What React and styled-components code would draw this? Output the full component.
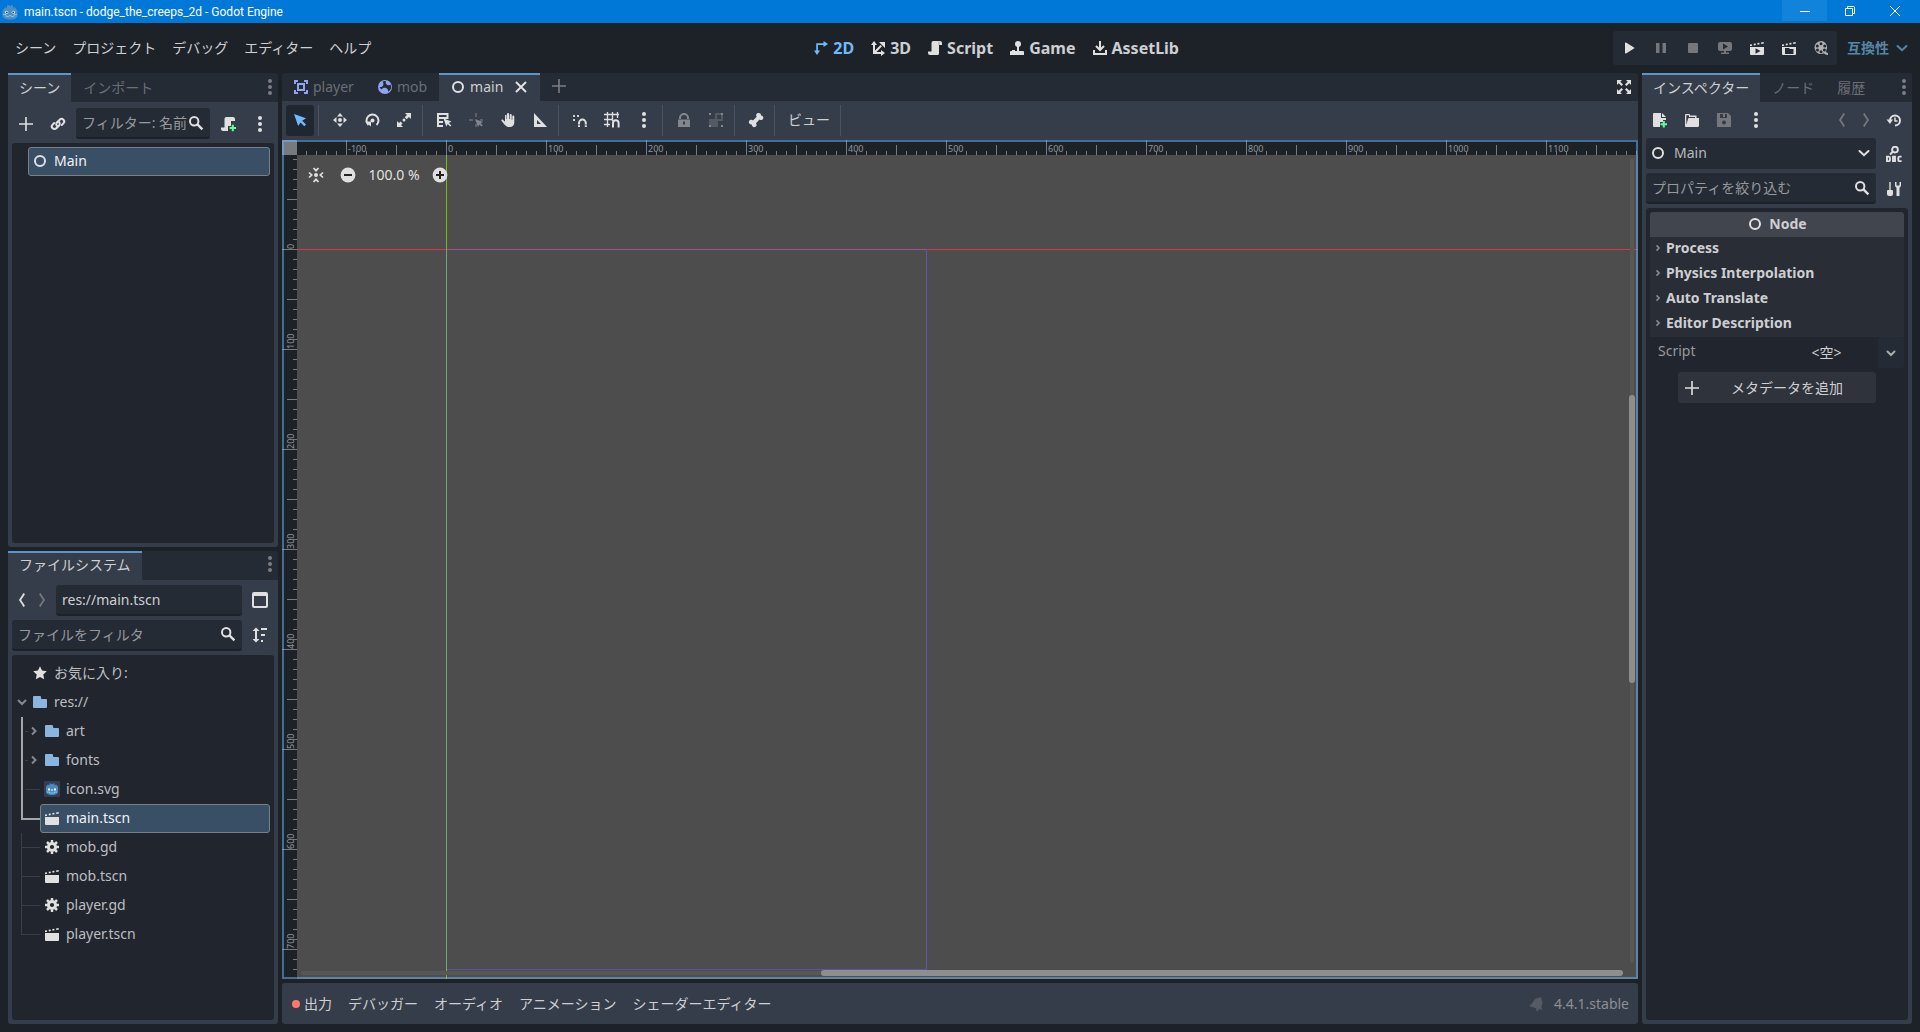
import styled, { createGlobalStyle } from 'styled-components';

const font = "'Noto Sans', 'Noto Sans CJK JP', sans-serif";

const sceneMenus = ['シーン', 'プロジェクト', 'デバッグ', 'エディター', 'ヘルプ'];

const mainScreens = [
  { icon: 'twoD', label: '2D', active: true },
  { icon: 'threeD', label: '3D' },
  { icon: 'script', label: 'Script' },
  { icon: 'game', label: 'Game' },
  { icon: 'assetLib', label: 'AssetLib' },
];

const runButtons = [
  { icon: 'play', label: 'Play' },
  { icon: 'pause', label: 'Pause', dim: true },
  { icon: 'stop', label: 'Stop', dim: true },
  { icon: 'remote', label: 'Remote Debug', dim: true },
  { icon: 'playScene', label: 'Run Current Scene' },
  { icon: 'playCustom', label: 'Run Specific Scene' },
  { icon: 'movie', label: 'Movie Maker', soft: true },
];

// null is a separator
const canvasTools = [
  { icon: 'select', label: 'Select', active: true },
  null,
  { icon: 'move', label: 'Move' },
  { icon: 'rotate', label: 'Rotate' },
  { icon: 'scale', label: 'Scale' },
  null,
  { icon: 'listSelect', label: 'List Select' },
  { icon: 'pivot', label: 'Pivot', dim: true },
  { icon: 'pan', label: 'Pan' },
  { icon: 'ruler', label: 'Ruler' },
  null,
  { icon: 'smartSnap', label: 'Smart Snap' },
  { icon: 'gridSnap', label: 'Grid Snap' },
  { icon: 'dots', label: 'Snapping Options' },
  null,
  { icon: 'lock', label: 'Lock', dim: true },
  { icon: 'group', label: 'Group', dim: true },
  null,
  { icon: 'bone', label: 'Skeleton' },
  null,
];

const files = [
  { name: 'お気に入り:', icon: 'star', level: 0 },
  { name: 'res://', icon: 'folder', level: 0, arrow: 'down', color: '#8ab5dd' },
  { name: 'art', icon: 'folder', level: 1, arrow: 'right', color: '#8ab5dd', line: 'bold' },
  { name: 'fonts', icon: 'folder', level: 1, arrow: 'right', color: '#8ab5dd', line: 'bold' },
  { name: 'icon.svg', icon: 'godotFile', level: 1, line: 'bold' },
  { name: 'main.tscn', icon: 'packedScene', level: 1, selected: true, line: 'boldEnd' },
  { name: 'mob.gd', icon: 'gear', level: 1, line: 'thin' },
  { name: 'mob.tscn', icon: 'packedScene', level: 1, line: 'thin' },
  { name: 'player.gd', icon: 'gear', level: 1, line: 'thin' },
  { name: 'player.tscn', icon: 'packedScene', level: 1, line: 'thinEnd' },
];

const sections = [
  'Process',
  'Physics Interpolation',
  'Auto Translate',
  'Editor Description',
];

const bottomTabs = [
  'デバッガー',
  'オーディオ',
  'アニメーション',
  'シェーダーエディター',
];

const clapper = (
  <path d="M1 4.600l1.800-.4.4 1.600-2.200.5zM4.600 3.800l2-.4.3 1.600-2 .4zM8.300 3.100l2-.4.3 1.600-2 .4zM12 2.400l2.600-.5.3 1.600-2.600.5z" />
);

const icons = {
  plus: <path d="M7.200 1v6.200H1v1.600h6.200V15h1.600V8.800H15V7.200H8.800V1z" />,
  link: (
    <g fill="none" stroke="currentColor" strokeWidth="2" strokeLinecap="round">
      <path d="M7.200 10.200a2.600 2.600 0 0 1-.3-3.700l2.800-2.800a2.600 2.600 0 0 1 3.700 3.700l-1.600 1.600" />
      <path d="M8.800 5.800a2.600 2.600 0 0 1 .3 3.700l-2.800 2.800a2.600 2.600 0 0 1-3.700-3.700l1.600-1.600" />
    </g>
  ),
  search: (
    <g fill="none" stroke="currentColor" strokeWidth="2">
      <circle cx="6.200" cy="6.200" r="4.200" />
      <path d="M9.200 9.200l5.200 5.200" strokeWidth="2.400" />
    </g>
  ),
  dots: (
    <g>
      <circle cx="8" cy="2" r="2" />
      <circle cx="8" cy="8" r="2" />
      <circle cx="8" cy="14" r="2" />
    </g>
  ),
  node: <circle cx="8" cy="8" r="5" fill="none" stroke="currentColor" strokeWidth="2" />,
  script: (
    <g>
      <path d="M6 1a2 2 0 0 0-1.500 2v8H9v2a2 2 0 0 1-2 2h3a2 2 0 0 0 2-2V5h3V3a2 2 0 0 0-2-2z" />
      <path d="M4.500 3v8.500H7V15H3a2 2 0 0 1-2-2v-1.500h3.500zM4.500 11H12v2a2 2 0 0 1-2 2H3z" />
      <path d="M12 1.500V5" stroke="#9a9a9a" strokeWidth=".8" />
    </g>
  ),
  scriptAdd: (
    <g>
      <path d="M6 1a2 2 0 0 0-1.500 2v8.500H1V13a2 2 0 0 0 2 2h5V10h3V5h4V3a2 2 0 0 0-2-2z" />
      <path d="M11.800 8.800v2.200H9.600v2h2.200v2.200h2V13H16v-2h-2.200V8.800z" fill="#5fff97" />
    </g>
  ),
  twoD: (
    <g>
      <path d="M3.200 11V3.200H11v1.700H4.900V11z" />
      <path d="M10.500 1L15 4l-4.500 3zM1 10.500h6L4 15z" />
    </g>
  ),
  threeD: (
    <g>
      <path d="M3 4h2v6.500L10.500 5 12 6.300 6.500 12H12v2H3z" />
      <path d="M1 5l3-4 3 4zM11 10l4 3-4 3zM9 2h6v6z" />
    </g>
  ),
  game: (
    <g>
      <circle cx="9" cy="4" r="3" />
      <path d="M8 6h2v5h4a1 1 0 0 1 1 1v3H1v-3a1 1 0 0 1 1-1h1v-1h3v1h2z" />
    </g>
  ),
  assetLib: (
    <g fill="none" stroke="currentColor" strokeWidth="2">
      <path d="M8 1v9M4 6l4 4 4-4" />
      <path d="M2 10v4h12v-4" />
    </g>
  ),
  play: <path d="M4 3.200v9.600a.7.7 0 0 0 1 .6l8-4.800a.7.7 0 0 0 0-1.200l-8-4.800a.7.7 0 0 0-1 .6z" />,
  pause: <path d="M3 3h3.500v10H3zM9.500 3H13v10H9.500z" />,
  stop: <rect x="3" y="3" width="10" height="10" rx="1" />,
  remote: (
    <path
      fillRule="evenodd"
      d="M3 2a2 2 0 0 0-2 2v5a2 2 0 0 0 2 2h4v1.500H4V14h8v-1.500H9V11h4a2 2 0 0 0 2-2V4a2 2 0 0 0-2-2zm3 1.500l5 3-5 3z"
    />
  ),
  playScene: (
    <g>
      {clapper}
      <path fillRule="evenodd" d="M1 7h14v7a1 1 0 0 1-1 1H2a1 1 0 0 1-1-1zm5.500 1.300v5.400l5-2.700z" />
    </g>
  ),
  playCustom: (
    <g>
      {clapper}
      <path fillRule="evenodd" d="M1 7h14v7a1 1 0 0 1-1 1H2a1 1 0 0 1-1-1zm3 1v6h8.500V9H8.500V8z" />
    </g>
  ),
  packedScene: (
    <g>
      {clapper}
      <path d="M1 7h14v7a1 1 0 0 1-1 1H2a1 1 0 0 1-1-1z" />
    </g>
  ),
  movie: (
    <path
      fillRule="evenodd"
      d="M8 1a6.500 6.500 0 1 0 3 12.300c.8.900 2 1.700 4 1.700v-2c-1.500 0-2-1-2-2a6.500 6.500 0 0 0-5-10zM8 2.300a1.500 1.500 0 1 1 0 3 1.500 1.500 0 0 1 0-3zM4.300 4.400a1.500 1.500 0 1 1 0 3 1.500 1.500 0 0 1 0-3zM11.700 4.400a1.500 1.500 0 1 1 0 3 1.500 1.500 0 0 1 0-3zM4.500 8.600a1.500 1.500 0 1 1 0 3 1.500 1.500 0 0 1 0-3zM11.400 8.600a1.500 1.500 0 1 1 0 3 1.500 1.500 0 0 1 0-3zM8 10.300a1.500 1.500 0 1 1 0 3 1.500 1.500 0 0 1 0-3z"
    />
  ),
  chevronDown: (
    <path d="M3.500 6l4.500 4.200L12.500 6" fill="none" stroke="currentColor" strokeWidth="2" strokeLinecap="round" />
  ),
  arrowDown: (
    <path d="M4.500 6.500L8 10l3.500-3.500" fill="none" stroke="currentColor" strokeWidth="2" strokeLinecap="round" />
  ),
  arrowRight: (
    <path d="M6 4.500L9.500 8 6 11.500" fill="none" stroke="currentColor" strokeWidth="2" />
  ),
  back: <path d="M10.200 1.500Q8.200 5 6 8q2.200 3 4.200 6.500" fill="none" stroke="currentColor" strokeWidth="1.800" />,
  forward: <path d="M5.800 1.500Q7.800 5 10 8q-2.200 3-4.200 6.500" fill="none" stroke="currentColor" strokeWidth="1.800" />,
  close: <path d="M3 3l10 10M13 3L3 13" fill="none" stroke="currentColor" strokeWidth="2" />,
  body: (
    <g>
      <path d="M1 1h4v2H3v2H1zM11 1h4v4h-2V3h-2zM1 11h2v2h2v2H1zM13 11h2v4h-4v-2h2z" />
      <rect x="5" y="5" width="6" height="6" fill="none" stroke="currentColor" strokeWidth="2" />
    </g>
  ),
  rigidBody: (
    <path
      fillRule="evenodd"
      d="M8 1a7 7 0 1 0 0 14A7 7 0 0 0 8 1zM9 2.300c-.7 1.500 0 3 1.500 3.700 1 .5 2.200.2 3-.5a5.700 5.700 0 0 1-2.300 7.200c.3-1.700-.7-3.200-2.300-3.700-1.700-.5-3.500.1-4.300 1.500-.9-.6-1.700-1.600-2-2.500 1.500.2 3-.3 3.600-1.800.5-1.300.2-2.500-.7-3.500 1-.5 2.300-.8 3.500-.4z"
    />
  ),
  expand: (
    <path d="M1 1h5L4.300 2.700 7 5.400 5.400 7 2.700 4.300 1 6zM15 1v5l-1.700-1.700L10.600 7 9 5.400l2.700-2.700L10 1zM1 15v-5l1.700 1.700L5.400 9 7 10.600l-2.700 2.700L6 15zM15 15h-5l1.700-1.700L9 10.600 10.600 9l2.700 2.700L15 10z" />
  ),
  select: <path d="M2 2l4.200 12 2.300-3.600 3.800 3.800 1.700-1.700-3.800-3.800L14 6.200z" />,
  move: (
    <g>
      <circle cx="8" cy="8" r="2" />
      <path d="M8 1l3 3.500H5zM8 15l3-3.500H5zM1 8l3.500-3v6zM15 8l-3.500-3v6z" />
    </g>
  ),
  rotate: (
    <g>
      <circle cx="8.500" cy="8.500" r="2" />
      <path d="M4.500 13A6 6 0 1 1 12.500 13" fill="none" stroke="currentColor" strokeWidth="2" />
      <path d="M1 9.500h6v5z" />
    </g>
  ),
  scale: (
    <g>
      <path d="M9 1h6v6l-2-2-2.300 2.300-2-2L11 3zM1 9l2 2 1.500-1.500 2 2L5 13l2 2H1z" />
      <circle cx="8" cy="8" r="1.500" />
    </g>
  ),
  listSelect: (
    <g>
      <path d="M1 1h11v2H1zM1 5h11v2H1zM1 9h6v2H1zM1 13h6v2H1zM1 1h2v14H1zM10.500 1h2v6h-2z" />
      <path d="M7.500 6.500l2.800 8 1.400-2.400 2.500 2.500 1.200-1.200-2.500-2.500 2.500-1.400z" />
    </g>
  ),
  pivot: (
    <g>
      <path d="M7 1h2v4H7zM1 7h4v2H1zM7 12h2v3H7zM12 7h3v2h-3z" opacity=".5" />
      <path d="M7 7l3 8 1.400-2.400 2 2 1.300-1.300-2-2L15 10z" />
    </g>
  ),
  pan: (
    <path d="M7 2a1 1 0 0 1 2 0v5h.7V3a1 1 0 0 1 2 0v5h.6V4.500a1 1 0 0 1 2 0V10c0 3-1.500 5-5 5-3 0-4.300-1.600-7.800-6.200C.8 7.600 2.300 7 3.200 8L5 9.700V3.500a1 1 0 0 1 1.500-.5V7H7z" />
  ),
  ruler: <path fillRule="evenodd" d="M2 1v14h13zm3 7l4 4H5z" />,
  smartSnap: (
    <g>
      <path d="M1 3h2v2H1zM1 7h2v2H1zM5 3h2v2H5z" opacity=".9" />
      <path d="M7 15v-4a3.200 3.200 0 0 1 6.800 0v4" fill="none" stroke="currentColor" strokeWidth="2" />
      <path d="M6 12.800h2M12.800 12.800h2" stroke="#363d4a" strokeWidth=".8" />
    </g>
  ),
  gridSnap: (
    <g>
      <path d="M3.500 0v15M8.500 0v9M13.500 0v6M0 2.500h15M0 7.500h9M0 12.500h6" stroke="currentColor" strokeWidth="1.300" />
      <path d="M9 15.500V11a2.800 2.800 0 0 1 5.600 0v4.500" fill="none" stroke="currentColor" strokeWidth="2" />
    </g>
  ),
  lock: (
    <g>
      <path d="M4 7V6a4 4 0 0 1 8 0v1" fill="none" stroke="currentColor" strokeWidth="2" />
      <path fillRule="evenodd" d="M2 7.500h12V15H2zm5 2v3h2v-3z" />
    </g>
  ),
  group: (
    <g>
      <path d="M1 7h6V1h8v8h-5v6H1zm8-4v4h4V3z" fillRule="evenodd" opacity=".4" />
      <path d="M1 1h2v2H1zM13 1h2v2h-2zM1 13h2v2H1zM13 13h2v2h-2z" />
    </g>
  ),
  bone: (
    <path d="M10.600 1a2.300 2.300 0 0 0-1.900 3.800L5 8.500a2.400 2.400 0 1 0-1.200 4A2.400 2.400 0 1 0 8 11.200l3.500-3.700a2.300 2.300 0 1 0 1.500-4A2.300 2.300 0 0 0 10.600 1z" />
  ),
  center: (
    <g>
      <circle cx="8" cy="8" r="2" />
      <path
        d="M5.500 1L8 3.700 10.500 1M5.500 15L8 12.300 10.500 15M1 5.500L3.700 8 1 10.500M15 5.500L12.300 8l2.700 2.500"
        fill="none"
        stroke="currentColor"
        strokeWidth="1.700"
      />
    </g>
  ),
  zoomOut: (
    <g>
      <circle cx="8" cy="8" r="7.400" />
      <path d="M4 8h8" stroke="#222" strokeWidth="2" />
    </g>
  ),
  zoomIn: (
    <g>
      <circle cx="8" cy="8" r="7.400" />
      <path d="M4 8h8M8 4v8" stroke="#222" strokeWidth="2" />
    </g>
  ),
  window: (
    <path fillRule="evenodd" d="M2 0a2 2 0 0 0-2 2v12a2 2 0 0 0 2 2h12a2 2 0 0 0 2-2V2a2 2 0 0 0-2-2zm0 4h12v10H2z" />
  ),
  sort: (
    <g>
      <path d="M3 4h2v8h2.500L4 15.500.5 12H3V4H.5L4 .5 7.500 4H5v8H3z" />
      <path d="M9 1h6v2H9zM9 7h4v2H9zM9 13h2v2H9z" />
    </g>
  ),
  star: <path d="M8 1.200l2 4.400 4.800.6-3.500 3.300.9 4.800L8 12l-4.200 2.300.9-4.800L1.200 6.200 6 5.600z" />,
  folder: (
    <path d="M2 2a1 1 0 0 0-1 1v10a1 1 0 0 0 1 1h12a1 1 0 0 0 1-1V6a1 1 0 0 0-1-1h-4a1 1 0 0 1-1-1V3a1 1 0 0 0-1-1z" />
  ),
  gear: (
    <g>
      <circle cx="8" cy="8" r="3.600" fill="none" stroke="currentColor" strokeWidth="3" />
      <path
        d="M8 1v2.500M8 12.500V15M1 8h2.500M12.500 8H15M3 3l1.800 1.800M11.200 11.200L13 13M13 3l-1.800 1.800M4.800 11.200L3 13"
        stroke="currentColor"
        strokeWidth="2.500"
      />
    </g>
  ),
  godotFile: (
    <g>
      <rect x="0" y="0" width="16" height="16" rx="1" fill="#363d52" />
      <path d="M2.500 5L4 3.500l1.500 1V2.500h1.500l1 1 1-1h1.500v2l1.500-1L13.500 5l.5 1v5c0 2-3 3-6 3s-6-1-6-3V6z" fill="#478cbf" />
      <path d="M4 7.500h2v2H4zM10 7.500h2v2h-2zM7.500 8h1v2h-1z" fill="#fff" />
      <path d="M3 11h2.500v1h5v-1H13" fill="none" stroke="#a9cbe5" strokeWidth=".7" />
    </g>
  ),
  godot: (
    <g>
      <path
        d="M1.500 5.500l2-2.500L5 4V1.500L7 1l1 1.500L9 1l2 .5V4l1.500-1 2 2.500 1 1.500v4.500C15.500 14 12 15.500 8 15.500S.5 14 .5 11.500V7z"
        fill="#4b90c4"
      />
      <path d="M1 10.500h3v2h3v-1h2v1h3v-2h3" fill="none" stroke="#9cc3e0" strokeWidth=".8" />
      <circle cx="4.600" cy="8.300" r="1.600" fill="#e4eff7" />
      <circle cx="11.400" cy="8.300" r="1.600" fill="#e4eff7" />
      <circle cx="4.800" cy="8.400" r=".9" fill="#414042" />
      <circle cx="11.200" cy="8.400" r=".9" fill="#414042" />
    </g>
  ),
  newResource: (
    <g>
      <path d="M2 1a1 1 0 0 0-1 1v12a1 1 0 0 0 1 1h6v-5h3V8h3V6H9V1zM10 1v4h4z" />
      <path d="M10.800 9v2.200H8.500v2h2.300v2.300h2v-2.300H15v-2h-2.200V9z" fill="#5fff97" />
    </g>
  ),
  load: (
    <path
      fillRule="evenodd"
      d="M1 3a1 1 0 0 1 1-1h3a1 1 0 0 1 1 1v.5h6.500V6H15v7.500a1.500 1.500 0 0 1-1.500 1.500H2a1 1 0 0 1-1-1zm1.300.3V13L4 7a1 1 0 0 1 1-1h6V5H5V3.300z"
    />
  ),
  save: (
    <path fillRule="evenodd" d="M1 1h11l3 3v11H1zm3 1v4h7V2H9v3H7V2zm4 6.500a2 2 0 1 0 0 4 2 2 0 0 0 0-4z" />
  ),
  history: (
    <g>
      <path d="M4 8.500a5 5 0 1 1 5 5" fill="none" stroke="currentColor" strokeWidth="2" />
      <path d="M.5 7.500h6.500L4 12z" />
      <path d="M9 5.500V9h2.500" fill="none" stroke="currentColor" strokeWidth="1.500" />
    </g>
  ),
  doc: (
    <g fill="none" stroke="currentColor" strokeWidth="1.900">
      <circle cx="9" cy="3.600" r="2.900" />
      <path d="M7 5.500L4 8.500" />
      <path d="M1 10.600v4.600h1.700a1.200 1.200 0 0 0 1.200-1.200v-2.200a1.200 1.200 0 0 0-1.200-1.200zM7 10.600h2v4.600H7zM15.600 10.600h-2.100a1.200 1.200 0 0 0-1.200 1.200V14a1.200 1.200 0 0 0 1.200 1.200h2.100" />
    </g>
  ),
  tools: (
    <g>
      <path d="M3.300 1h1.400v8H6a1 1 0 0 1 1 1v3a2 2 0 0 1-2 2H3a2 2 0 0 1-2-2v-3a1 1 0 0 1 1-1h1.300z" />
      <path d="M9 1v3.500a3 3 0 0 0 1.500 2.300V15h3V6.800A3 3 0 0 0 15 4.500V1h-1.500v3.500h-3V1z" />
    </g>
  ),
  bell: (
    <path d="M12.500 1.500c1 .3 1.500 1 1 2l.8 2c.7 2-.8 4-.8 6l1 2.200-3.500-.7-.8 1.800h-2l-.2-2.500L.8 10 3 8.500c1.700-1.200 2-3.500 4-5.200 1.500-1.200 4-1.800 5.500-1.800z" />
  ),
};

const Svg = styled.svg`
  display: block;
  flex: none;
  fill: currentColor;
  color: ${(props) => props.$color || 'inherit'};
`;

const Icon = ({ name, color }) => (
  <Svg width="16" height="16" viewBox="0 0 16 16" $color={color} aria-hidden="true">
    {icons[name]}
  </Svg>
);

const GlobalStyle = createGlobalStyle`
  * {
    box-sizing: border-box;
  }
  body {
    margin: 0;
    background: #1d2229;
    color: #cdcfd2;
    font-family: ${font};
    font-size: 14px;
    line-height: 20px;
  }
  button, input, select {
    margin: 0;
    padding: 0;
    border: 0;
    background: none;
    color: inherit;
    font: inherit;
  }
  ul {
    margin: 0;
    padding: 0;
    list-style: none;
  }
`;

const Editor = styled.div`
  display: flex;
  flex-direction: column;
  min-height: 100vh;
`;

const TitleBar = styled.header`
  display: flex;
  align-items: center;
  height: 23px;
  padding: 0 3px 0 2px;
  background: #0078d7;
  color: #fff;
  font-family: Roboto, ${font};
  font-size: 12px;
`;

const WindowTitle = styled.div`
  flex: 1;
  margin-left: 6px;
`;

const WindowButton = styled.button`
  display: flex;
  align-items: center;
  justify-content: center;
  align-self: flex-start;
  width: 45px;
  height: 21px;
  background: ${(props) => (props.$hover ? '#1283da' : 'none')};
  svg {
    fill: none;
    stroke: #fff;
  }
`;

const MenuBar = styled.div`
  display: flex;
  align-items: center;
  justify-content: space-between;
  height: 50px;
  padding: 0 10px 0 7px;
`;

const Group = styled.div`
  display: flex;
  align-items: center;
`;

const MenuButton = styled.button`
  display: flex;
  align-items: center;
  padding: 4px 8px;
`;

const ScreenButton = styled.button`
  display: flex;
  align-items: center;
  gap: 4px;
  padding: 4px 8px;
  font-size: 16px;
  font-weight: bold;
  color: ${(props) => (props.$active ? '#70bafa' : '#cdcfd2')};
  svg {
    color: ${(props) => (props.$active ? '#70bafa' : '#e0e0e0')};
  }
`;

const RunBar = styled.div`
  display: flex;
  gap: 4px;
  padding: 3px 2px;
  border-radius: 3px;
  background: #252b34;
`;

const IconButton = styled.button`
  display: flex;
  align-items: center;
  justify-content: center;
  flex: none;
  width: ${(props) => props.$width || 28}px;
  height: 28px;
  border-radius: 3px;
  color: ${(props) => (props.$dim ? '#75777c' : props.$soft ? '#b0b1b3' : '#e0e0e0')};
`;

const RenderButton = styled(MenuButton)`
  gap: 5px;
  padding: 4px 0 4px 10px;
  color: #5586a8;
  font-weight: bold;
`;

const Workspace = styled.div`
  flex: 1;
  display: grid;
  grid-template-columns: 270px 1fr 270px;
  gap: 4px;
  padding: 0 8px 8px;
`;

const Column = styled.div`
  display: flex;
  flex-direction: column;
  gap: 4px;
  min-width: 0;
`;

const Dock = styled.section`
  flex: 1;
  display: flex;
  flex-direction: column;
  min-height: 0;
`;

const TabBar = styled.div`
  display: flex;
  align-items: stretch;
  gap: 1px;
  height: ${(props) => props.$height || 29}px;
  background: #252b34;
  border-radius: 3px 3px 0 0;
  > :last-child {
    margin-left: auto;
  }
`;

const Tab = styled.button`
  display: flex;
  align-items: center;
  gap: 4px;
  padding: 0 11px 2px;
  border-top: 2px solid ${(props) => (props.$active ? '#5a96cd' : 'transparent')};
  background: ${(props) => (props.$active ? '#363d4a' : 'none')};
  color: ${(props) => (props.$active ? '#cdcfd2' : '#6a6e76')};
`;

const CloseIcon = styled.span`
  margin-left: 6px;
  color: #e0e0e0;
`;

const TabMenu = styled.button`
  display: flex;
  align-items: center;
  color: #7b7e84;
  padding: 0 ${(props) => props.$side || 0}px 2px;
`;

const DockBody = styled.div`
  flex: 1;
  display: flex;
  flex-direction: column;
  gap: 4px;
  padding: ${(props) => props.$top}px 4px 4px;
  background: #363d4a;
  border-radius: 0 0 3px 3px;
`;

const Row = styled.div`
  display: flex;
  align-items: center;
  gap: 4px;
`;

const Spacer = styled.div`
  flex: 1;
`;

const Field = styled.label`
  flex: 1;
  display: flex;
  align-items: center;
  min-width: 0;
  height: 31px;
  padding: 0 6px;
  border-bottom: 2px solid #1d2229;
  border-radius: 3px;
  background: #252b34;
  color: #e0e0e0;
`;

const SelectField = styled(Field)`
  padding: 0 4px;
  border-bottom-color: #252b34;
`;

const TextInput = styled.input`
  flex: 1;
  min-width: 0;
  height: 28px;
  color: #cdcfd2;
  outline: none;
  &::placeholder {
    color: #96999d;
    opacity: 1;
  }
`;

const NodeSelect = styled.select`
  flex: 1;
  min-width: 0;
  margin-left: 8px;
  appearance: none;
  outline: none;
  color: #b8babd;
`;

const Tree = styled.ul`
  flex: 1;
  padding: 4px 4px 4px 0;
  border-radius: 3px;
  background: #21262e;
`;

const TreeRow = styled.li`
  position: relative;
  display: flex;
  align-items: center;
  height: 29px;
  padding-left: ${(props) => 4 + props.$level * 12}px;
  /* the connector to the parent, down the left and across to the item */
  &::before,
  &::after {
    content: '';
    display: ${(props) => (props.$line ? 'block' : 'none')};
    position: absolute;
    left: 9px;
    background: ${(props) => (/^bold/.test(props.$line) ? '#a4a5a8' : '#3a3e47')};
  }
  &::before {
    top: 0;
    width: ${(props) => (/^bold/.test(props.$line) ? 2 : 1)}px;
    height: ${(props) => (/End$/.test(props.$line) ? 15 : 29)}px;
  }
  &::after {
    top: 14px;
    left: ${(props) => (props.$line === 'bold' ? 13 : 9)}px;
    width: ${(props) => (props.$arrow ? 3 : props.$line === 'bold' ? 15 : 19)}px;
    height: ${(props) => (props.$line === 'boldEnd' ? 2 : 1)}px;
    ${(props) => props.$line === 'bold' && 'background: #3a3e47;'}
  }
`;

const ArrowSlot = styled.span`
  display: flex;
  justify-content: center;
  width: 12px;
  color: #85888c;
`;

const TreeItem = styled.button`
  flex: 1;
  display: flex;
  align-items: center;
  gap: 6px;
  height: 29px;
  padding: 0 3px 1px;
  border: 1px solid ${(props) => (props.$selected ? '#7b8087' : 'transparent')};
  border-radius: 3px;
  background: ${(props) => (props.$selected ? '#394f66' : 'none')};
  color: ${(props) => (props.$selected ? '#f0f2f4' : '#bcbec1')};
  text-align: left;
`;

const Toolbar = styled.div`
  display: flex;
  align-items: center;
  gap: 4px;
  height: 39px;
  padding: 0 4px 1px;
  background: #363d4a;
`;

const ToolButton = styled(IconButton)`
  height: 31px;
  padding-bottom: 1px;
  color: ${(props) => (props.$active ? '#70bafa' : props.$dim ? '#83868c' : '#e0e0e0')};
  background: ${(props) => (props.$active ? '#212730' : 'none')};
`;

const Separator = styled.span`
  width: 4px;
  height: 31px;
  border-left: 1px solid #4b515d;
`;

const ViewButton = styled.button`
  height: 31px;
  padding: 0 6px;
`;

const Viewport = styled.div`
  flex: 1;
  position: relative;
  display: grid;
  grid-template: 15px 1fr / 15px 1fr;
  background: #1d2229;
  /* focus frame, drawn over the rulers and the canvas */
  &::after {
    content: '';
    position: absolute;
    inset: 0;
    border: 2px solid rgba(112, 186, 250, 0.5);
    pointer-events: none;
  }
`;

const RulerCorner = styled.div`
  background: #777a7f;
`;

const Ruler = styled.svg`
  display: block;
  width: 100%;
  height: 100%;
  min-width: 0;
  min-height: 0;
  fill: #777a7f;
  font-size: 9px;
  text {
    fill: #92959a;
  }
`;

const Canvas = styled.div`
  position: relative;
  overflow: hidden;
  background: #4d4d4d;
`;

const Guides = styled.svg`
  position: absolute;
  inset: 0;
  width: 100%;
  height: 100%;
`;

const ZoomBar = styled.div`
  position: absolute;
  top: 6px;
  left: 5px;
  display: flex;
  align-items: center;
  gap: 4px;
  color: #e0e0e0;
  text-shadow: 0 1px 1px #222;
`;

const ZoomValue = styled.button`
  width: 56px;
`;

const ScrollTrack = styled.div`
  position: absolute;
  border-radius: 3px;
  background: #575757;
  ${(props) =>
    props.$vertical
      ? 'top: 3px; bottom: 16px; right: 4px; width: 4px;'
      : 'left: 4px; right: 15px; bottom: 4px; height: 4px;'}
`;

const ScrollThumb = styled.div`
  position: absolute;
  border-radius: 3px;
  background: #8e8e8e;
  ${(props) =>
    props.$vertical
      ? 'top: 29.4%; height: 35.8%; left: -1px; right: -1px;'
      : 'left: 39.3%; right: 0; top: -1px; bottom: -1px;'}
`;

const BottomPanel = styled.footer`
  display: flex;
  align-items: center;
  height: 41px;
  padding: 1px 9px 0 2px;
  border-radius: 3px;
  background: #363d4a;
`;

const ErrorDot = styled.span`
  width: 8px;
  height: 8px;
  margin-right: 4px;
  border-radius: 50%;
  background: #ff786b;
`;

const Version = styled.button`
  margin-left: 10px;
  color: #8b8f96;
`;

const Inspector = styled.div`
  flex: 1;
  padding: 4px;
  border-radius: 3px;
  background: #21262e;
`;

const Category = styled.h2`
  display: flex;
  align-items: center;
  justify-content: center;
  gap: 6px;
  height: 25px;
  margin: 0;
  padding-bottom: 2px;
  border-radius: 3px 3px 0 0;
  background: #41454e;
  font-size: 14px;
  font-weight: bold;
`;

const Section = styled.button`
  display: flex;
  align-items: center;
  gap: 2px;
  width: 100%;
  height: 25px;
  padding: 0 0 3px 2px;
  background: #292d35;
  font-weight: bold;
  svg {
    width: 12px;
    color: #8c8e92;
  }
`;

const Property = styled.div`
  display: grid;
  grid-template-columns: 1fr 99px 26px;
  gap: 2px;
  height: 31px;
  margin-bottom: 4px;
`;

const PropertyName = styled.span`
  padding: 4px 8px;
  color: #97999c;
`;

const PropertyMenu = styled.button`
  display: flex;
  align-items: center;
  justify-content: center;
  border-radius: 3px;
  background: #252b34;
  color: #a9abad;
`;

const AddMetadata = styled.button`
  display: flex;
  align-items: center;
  width: 198px;
  height: 31px;
  margin-left: 28px;
  padding: 0 2px 0 6px;
  border-radius: 3px;
  background: #2f333c;
  color: #e0e0e0;
  span {
    flex: 1;
    color: #cdcfd2;
  }
`;

const range = (from, to) => {
  const list = [];
  for (let n = from; n <= to; n += 10) list.push(n);
  return list;
};

// long tick each 100, half tick each 50, short tick for the rest
const tickLength = (n) => {
  if (n % 100 === 0) return 15;
  return n % 50 === 0 ? 10 : 4;
};

const ORIGIN_X = 149;
const ORIGIN_Y = 94;

function HorizontalRuler() {
  return (
    <Ruler>
      {range(-140, 1190).map((n) => (
        <g key={n}>
          <rect x={ORIGIN_X + n} y={15 - tickLength(n)} width="1" height={tickLength(n)} />
          {n % 100 === 0 && (
            <text x={ORIGIN_X + n + 2} y="12">
              {n}
            </text>
          )}
        </g>
      ))}
    </Ruler>
  );
}

function VerticalRuler() {
  return (
    <Ruler>
      {range(-90, 720).map((n) => (
        <g key={n}>
          <rect x={15 - tickLength(n)} y={ORIGIN_Y + n} width={tickLength(n)} height="1" />
          {n % 100 === 0 && (
            <text transform={`translate(12 ${ORIGIN_Y + n}) rotate(-90)`}>{n}</text>
          )}
        </g>
      ))}
    </Ruler>
  );
}

function CanvasView() {
  return (
    <Viewport>
      <RulerCorner />
      <HorizontalRuler />
      <VerticalRuler />
      <Canvas>
        <Guides>
          <rect x="0" y={ORIGIN_Y} width="100%" height="1" fill="#d43848" />
          <rect x={ORIGIN_X} y="0" width="1" height="100%" fill="#7bbd0c" />
          {/* 480 x 720 game area */}
          <rect x={ORIGIN_X} y={ORIGIN_Y} width="480" height="1" fill="#a8499a" />
          <rect x={ORIGIN_X} y={ORIGIN_Y} width="1" height="720" fill="#6fa577" />
          <rect x={ORIGIN_X + 480} y={ORIGIN_Y} width="1" height="720" fill="#5e55ad" />
          <rect x={ORIGIN_X + 1} y={ORIGIN_Y + 720} width="480" height="1" fill="#5a55a0" />
        </Guides>
        <ScrollTrack $vertical>
          <ScrollThumb $vertical />
        </ScrollTrack>
        <ScrollTrack>
          <ScrollThumb />
        </ScrollTrack>
        <ZoomBar>
          <IconButton aria-label="Center View">
            <Icon name="center" />
          </IconButton>
          <IconButton aria-label="Zoom Out">
            <Icon name="zoomOut" />
          </IconButton>
          <ZoomValue>100.0 %</ZoomValue>
          <IconButton aria-label="Zoom In">
            <Icon name="zoomIn" />
          </IconButton>
        </ZoomBar>
      </Canvas>
    </Viewport>
  );
}

function FileRow({ file }) {
  return (
    <TreeRow $level={file.level} $line={file.line} $arrow={file.arrow}>
      <ArrowSlot>
        {file.arrow && <Icon name={file.arrow === 'down' ? 'arrowDown' : 'arrowRight'} />}
      </ArrowSlot>
      <TreeItem $selected={file.selected}>
        <Icon name={file.icon} color={file.color || '#e0e0e0'} />
        {file.name}
      </TreeItem>
    </TreeRow>
  );
}

function SceneDock() {
  return (
    <Dock>
      <TabBar>
        <Tab $active>シーン</Tab>
        <Tab>インポート</Tab>
        <TabMenu aria-label="Dock Menu">
          <Icon name="dots" />
        </TabMenu>
      </TabBar>
      <DockBody $top={6}>
        <Row>
          <IconButton aria-label="Add Node">
            <Icon name="plus" />
          </IconButton>
          <IconButton aria-label="Instantiate Scene">
            <Icon name="link" />
          </IconButton>
          <Field>
            <TextInput placeholder="フィルター: 名前" aria-label="フィルター" />
            <Icon name="search" />
          </Field>
          <IconButton aria-label="Attach Script">
            <Icon name="scriptAdd" />
          </IconButton>
          <IconButton aria-label="Scene Options">
            <Icon name="dots" />
          </IconButton>
        </Row>
        <Tree>
          <FileRow file={{ name: 'Main', icon: 'node', level: 0, selected: true }} />
        </Tree>
      </DockBody>
    </Dock>
  );
}

function FileSystemDock() {
  return (
    <Dock>
      <TabBar>
        <Tab $active>ファイルシステム</Tab>
        <TabMenu aria-label="Dock Menu">
          <Icon name="dots" />
        </TabMenu>
      </TabBar>
      <DockBody $top={5}>
        <Row>
          <Group>
            <IconButton $width={20} aria-label="Back">
              <Icon name="back" />
            </IconButton>
            <IconButton $width={20} $dim aria-label="Forward">
              <Icon name="forward" />
            </IconButton>
          </Group>
          <Field>
            <TextInput defaultValue="res://main.tscn" aria-label="Path" />
          </Field>
          <IconButton aria-label="Split Mode">
            <Icon name="window" />
          </IconButton>
        </Row>
        <Row>
          <Field>
            <TextInput placeholder="ファイルをフィルタ" aria-label="ファイルをフィルタ" />
            <Icon name="search" />
          </Field>
          <IconButton aria-label="Sort Files">
            <Icon name="sort" />
          </IconButton>
        </Row>
        <Tree>
          {files.map((file) => (
            <FileRow key={file.name} file={file} />
          ))}
        </Tree>
      </DockBody>
    </Dock>
  );
}

function InspectorDock() {
  return (
    <Dock>
      <TabBar>
        <Tab $active>インスペクター</Tab>
        <Tab>ノード</Tab>
        <Tab>履歴</Tab>
        <TabMenu aria-label="Dock Menu">
          <Icon name="dots" />
        </TabMenu>
      </TabBar>
      <DockBody $top={4}>
        <Row>
          <IconButton aria-label="New Resource">
            <Icon name="newResource" />
          </IconButton>
          <IconButton aria-label="Load Resource">
            <Icon name="load" />
          </IconButton>
          <IconButton $dim aria-label="Save Resource">
            <Icon name="save" />
          </IconButton>
          <IconButton aria-label="Resource Options">
            <Icon name="dots" />
          </IconButton>
          <Spacer />
          <IconButton $width={20} $dim aria-label="Previous Object">
            <Icon name="back" />
          </IconButton>
          <IconButton $width={20} $dim aria-label="Next Object">
            <Icon name="forward" />
          </IconButton>
          <IconButton aria-label="Object History">
            <Icon name="history" />
          </IconButton>
        </Row>
        <Row>
          <SelectField>
            <Icon name="node" />
            <NodeSelect aria-label="Object">
              <option>Main</option>
            </NodeSelect>
            <Icon name="chevronDown" />
          </SelectField>
          <IconButton aria-label="Open Documentation">
            <Icon name="doc" />
          </IconButton>
        </Row>
        <Row>
          <Field>
            <TextInput placeholder="プロパティを絞り込む" aria-label="プロパティを絞り込む" />
            <Icon name="search" />
          </Field>
          <IconButton aria-label="Manage Properties">
            <Icon name="tools" />
          </IconButton>
        </Row>
        <Inspector>
          <Category>
            <Icon name="node" color="#e0e0e0" />
            Node
          </Category>
          {sections.map((section) => (
            <Section key={section}>
              <Icon name="arrowRight" />
              {section}
            </Section>
          ))}
          <Property>
            <PropertyName>Script</PropertyName>
            <button>&lt;空&gt;</button>
            <PropertyMenu aria-label="Script Options">
              <Icon name="arrowDown" />
            </PropertyMenu>
          </Property>
          <AddMetadata>
            <Icon name="plus" />
            <span>メタデータを追加</span>
          </AddMetadata>
        </Inspector>
      </DockBody>
    </Dock>
  );
}

export default function App() {
  return (
    <Editor>
      <GlobalStyle />
      <TitleBar>
        <Icon name="godot" />
        <WindowTitle>main.tscn - dodge_the_creeps_2d - Godot Engine</WindowTitle>
        <WindowButton $hover aria-label="Minimize">
          <svg width="10" height="10">
            <path d="M0 5.500h10" />
          </svg>
        </WindowButton>
        <WindowButton aria-label="Restore">
          <svg width="10" height="10">
            <path d="M.5 2.500h7v7h-7zM2.500 2.500V.5h6a1 1 0 0 1 1 1v6h-2" />
          </svg>
        </WindowButton>
        <WindowButton aria-label="Close">
          <svg width="10" height="10">
            <path d="M0 0l10 10M10 0L0 10" />
          </svg>
        </WindowButton>
      </TitleBar>
      <MenuBar>
        <Group as="nav">
          {sceneMenus.map((menu) => (
            <MenuButton key={menu}>{menu}</MenuButton>
          ))}
        </Group>
        <Group>
          {mainScreens.map((screen) => (
            <ScreenButton key={screen.label} $active={screen.active}>
              <Icon name={screen.icon} />
              {screen.label}
            </ScreenButton>
          ))}
        </Group>
        <Group>
          <RunBar>
            {runButtons.map((run) => (
              <IconButton key={run.icon} $dim={run.dim} $soft={run.soft} aria-label={run.label}>
                <Icon name={run.icon} />
              </IconButton>
            ))}
          </RunBar>
          <RenderButton>
            互換性
            <Icon name="chevronDown" />
          </RenderButton>
        </Group>
      </MenuBar>
      <Workspace>
        <Column>
          <SceneDock />
          <FileSystemDock />
        </Column>
        <Column>
          <Dock>
            <TabBar $height={28}>
              <Tab>
                <Icon name="body" color="#8da5f3" />
                player
              </Tab>
              <Tab>
                <Icon name="rigidBody" color="#8da5f3" />
                mob
              </Tab>
              <Tab $active>
                <Icon name="node" color="#e0e0e0" />
                main
                <CloseIcon>
                  <Icon name="close" />
                </CloseIcon>
              </Tab>
              <TabMenu $side={10} aria-label="New Scene">
                <Icon name="plus" />
              </TabMenu>
              <IconButton aria-label="Distraction Free Mode">
                <Icon name="expand" />
              </IconButton>
            </TabBar>
            <Toolbar>
              {canvasTools.map((tool, i) =>
                tool ? (
                  <ToolButton key={tool.icon} $active={tool.active} $dim={tool.dim} aria-label={tool.label}>
                    <Icon name={tool.icon} />
                  </ToolButton>
                ) : (
                  <Separator key={i} />
                ),
              )}
              <ViewButton>ビュー</ViewButton>
              <Separator />
            </Toolbar>
            <CanvasView />
          </Dock>
          <BottomPanel>
            <MenuButton>
              <ErrorDot />
              出力
            </MenuButton>
            {bottomTabs.map((tab) => (
              <MenuButton key={tab}>{tab}</MenuButton>
            ))}
            <Spacer />
            <Icon name="bell" color="#555a64" />
            <Version>4.4.1.stable</Version>
          </BottomPanel>
        </Column>
        <InspectorDock />
      </Workspace>
    </Editor>
  );
}
